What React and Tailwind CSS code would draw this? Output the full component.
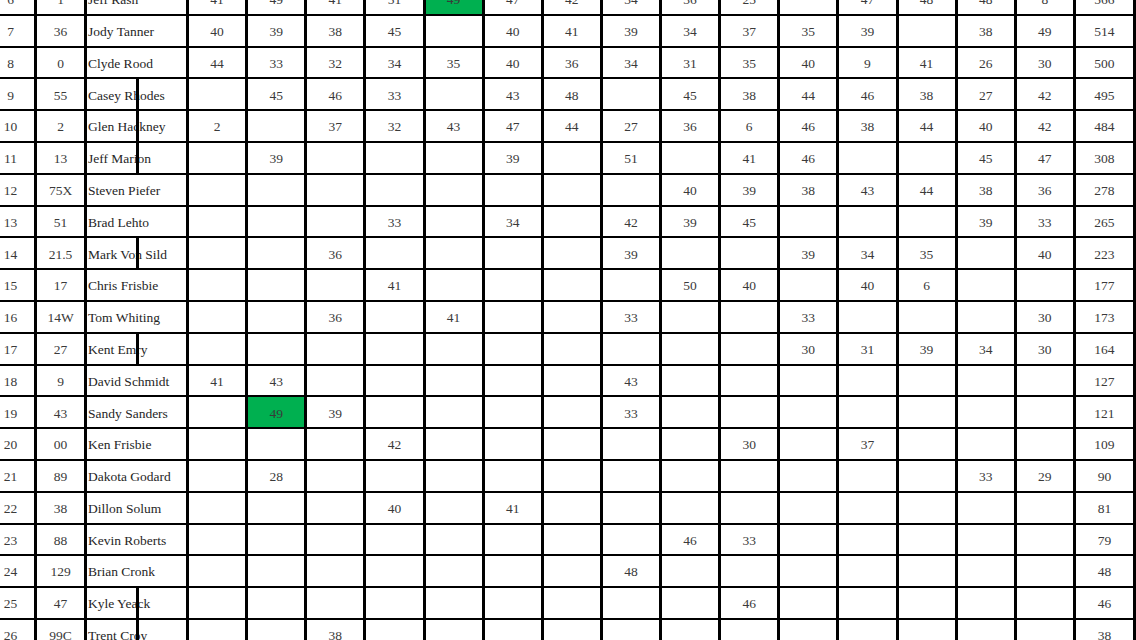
const ROWS = [
  { rank: 6, no: '1', name: 'Jeff Rash', s: { 1: 41, 2: 49, 3: 41, 4: 51, 5: 49, 6: 47, 7: 42, 8: 34, 9: 36, 10: 25, 12: 47, 13: 48, 14: 48, 15: 8 }, total: 566, green: 5 },
  { rank: 7, no: '36', name: 'Jody Tanner', s: { 1: 40, 2: 39, 3: 38, 4: 45, 6: 40, 7: 41, 8: 39, 9: 34, 10: 37, 11: 35, 12: 39, 14: 38, 15: 49 }, total: 514 },
  { rank: 8, no: '0', name: 'Clyde Rood', s: { 1: 44, 2: 33, 3: 32, 4: 34, 5: 35, 6: 40, 7: 36, 8: 34, 9: 31, 10: 35, 11: 40, 12: 9, 13: 41, 14: 26, 15: 30 }, total: 500 },
  { rank: 9, no: '55', name: 'Casey Rhodes', s: { 2: 45, 3: 46, 4: 33, 6: 43, 7: 48, 9: 45, 10: 38, 11: 44, 12: 46, 13: 38, 14: 27, 15: 42 }, total: 495, mark: true },
  { rank: 10, no: '2', name: 'Glen Hackney', s: { 1: 2, 3: 37, 4: 32, 5: 43, 6: 47, 7: 44, 8: 27, 9: 36, 10: 6, 11: 46, 12: 38, 13: 44, 14: 40, 15: 42 }, total: 484, mark: true },
  { rank: 11, no: '13', name: 'Jeff Marion', s: { 2: 39, 6: 39, 8: 51, 10: 41, 11: 46, 14: 45, 15: 47 }, total: 308, mark: true },
  { rank: 12, no: '75X', name: 'Steven Piefer', s: { 9: 40, 10: 39, 11: 38, 12: 43, 13: 44, 14: 38, 15: 36 }, total: 278 },
  { rank: 13, no: '51', name: 'Brad Lehto', s: { 4: 33, 6: 34, 8: 42, 9: 39, 10: 45, 14: 39, 15: 33 }, total: 265 },
  { rank: 14, no: '21.5', name: 'Mark Von Sild', s: { 3: 36, 8: 39, 11: 39, 12: 34, 13: 35, 15: 40 }, total: 223, mark: true },
  { rank: 15, no: '17', name: 'Chris Frisbie', s: { 4: 41, 9: 50, 10: 40, 12: 40, 13: 6 }, total: 177 },
  { rank: 16, no: '14W', name: 'Tom Whiting', s: { 3: 36, 5: 41, 8: 33, 11: 33, 15: 30 }, total: 173 },
  { rank: 17, no: '27', name: 'Kent Emry', s: { 11: 30, 12: 31, 13: 39, 14: 34, 15: 30 }, total: 164, mark: true },
  { rank: 18, no: '9', name: 'David Schmidt', s: { 1: 41, 2: 43, 8: 43 }, total: 127 },
  { rank: 19, no: '43', name: 'Sandy Sanders', s: { 2: 49, 3: 39, 8: 33 }, total: 121, green: 2 },
  { rank: 20, no: '00', name: 'Ken Frisbie', s: { 4: 42, 10: 30, 12: 37 }, total: 109 },
  { rank: 21, no: '89', name: 'Dakota Godard', s: { 2: 28, 14: 33, 15: 29 }, total: 90 },
  { rank: 22, no: '38', name: 'Dillon Solum', s: { 4: 40, 6: 41 }, total: 81 },
  { rank: 23, no: '88', name: 'Kevin Roberts', s: { 9: 46, 10: 33 }, total: 79 },
  { rank: 24, no: '129', name: 'Brian Cronk', s: { 8: 48 }, total: 48 },
  { rank: 25, no: '47', name: 'Kyle Yeack', s: { 10: 46 }, total: 46, mark: true },
  { rank: 26, no: '99C', name: 'Trent Croy', s: { 3: 38 }, total: 38, mark: true },
]

const RACES = Array.from({ length: 15 }, (_, i) => i + 1)

function Cell({ children, green }) {
  return (
    <div className={`flex items-center justify-center pt-[2px] text-[#3a3a3a] ${green ? 'bg-[#00b050]' : 'bg-white'}`}>
      {children}
    </div>
  )
}

export default function App() {
  return (
    <div className="w-[1136px] h-[640px] overflow-hidden bg-white" style={{ fontFamily: '"Liberation Serif", "Times New Roman", serif' }}>
      <div className="-ml-[16px] -mt-[18px] w-max grid grid-cols-[47px_47px_99px_repeat(15,56.13px)_57px] auto-rows-[29.8px] gap-x-[3px] gap-y-[2px] bg-black px-[3px] py-[2px] text-[13.5px] leading-none">
        {ROWS.map(row => (
          <div key={row.rank} className="contents">
            <Cell>{row.rank}</Cell>
            <Cell>{row.no}</Cell>
            <div className="relative flex items-center pl-[1px] pt-[2px] bg-white text-[#262626] whitespace-nowrap">
              {row.name}
              {row.mark && <span className="absolute left-[49px] -top-[1px] -bottom-[1px] w-[3px] bg-black" />}
            </div>
            {RACES.map(r => (
              <Cell key={r} green={row.green === r}>{row.s[r] ?? ''}</Cell>
            ))}
            <Cell>{row.total}</Cell>
          </div>
        ))}
      </div>
    </div>
  )
}
